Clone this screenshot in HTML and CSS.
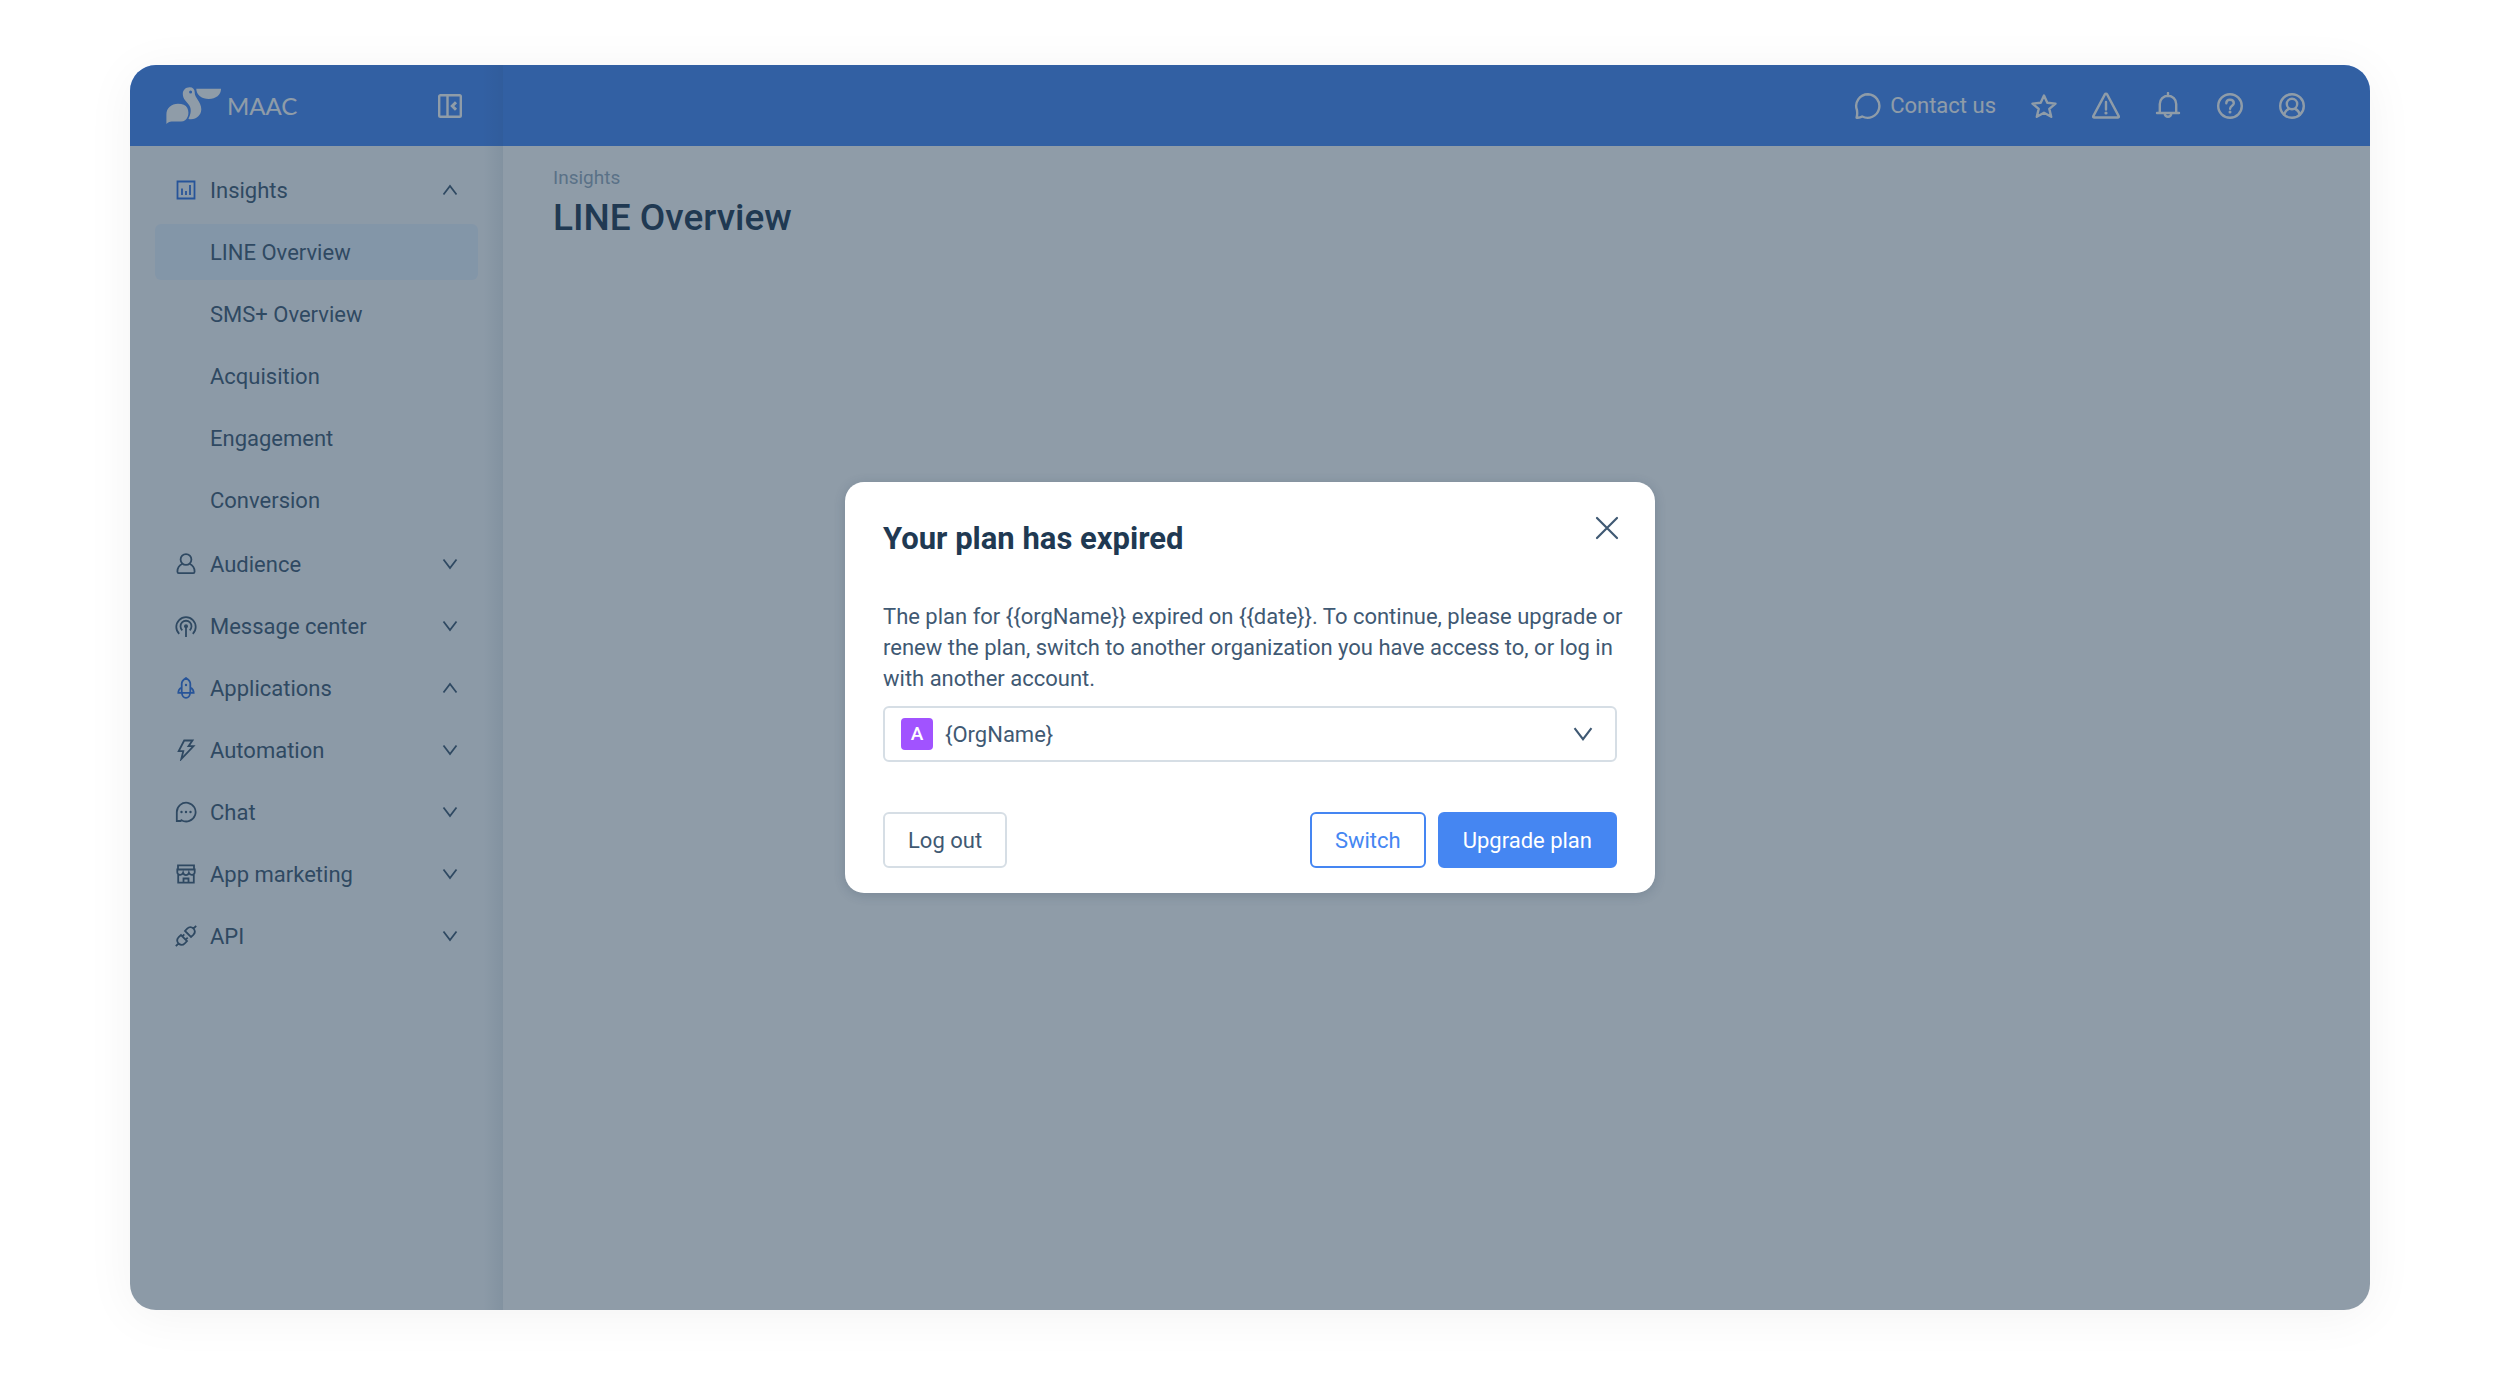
FILE: index.html
```html
<!DOCTYPE html>
<html lang="en">
<head>
    <meta charset="UTF-8">
    <meta name="viewport" content="width=device-width, initial-scale=1.0">
    <title>MAAC - LINE Overview</title>
    <link rel="stylesheet" href="styles.css">
</head>
<body>
    <svg class="sprite" aria-hidden="true">
        <symbol id="down" viewBox="0 0 20 20"><path d="M3.500 5.500 10 14l6.500-8.500"/></symbol>
        <symbol id="up" viewBox="0 0 20 20"><path d="M3.500 14.500 10 6l6.500 8.500"/></symbol>
    </svg>
    <div class="app">
        <aside class="sidebar">
            <div class="brand">
                <a class="logo" href="#">
                    <svg width="56" height="38" viewBox="0 0 56 38" aria-hidden="true">
                        <path d="M.4 37V27.500C.4 21 5.500 16.800 12 16.800c4.500 0 7.800 1.400 9.300 4.200 2.800 5.600.3 13.500-6.300 13.600H5.500C3.500 34.600 1.800 35.500.4 37z"/>
                        <path fill-rule="evenodd" d="M23.700.2c3.200 0 5 2 5 5-.3 5.500 6.600 9.500 6.600 17 0 5.600-4.500 10-10.300 10-1 0-2-.1-2.600-.5 2.500-4.700 3.300-9.700.8-13.500-2.300-3.300-6.400-6-6.400-11.200C16.800 3 19.500.2 23.700.2zM24.600 3.600a1.500 1.500 0 1 0 0 3 1.500 1.500 0 0 0 0-3z"/>
                        <path d="M30.300 1.700H55c0 6-5.300 10.300-12.200 10.300S30.300 8 30.300 1.700z"/>
                    </svg>
                    <span>MAAC</span>
                </a>
                <button class="collapse" aria-label="Collapse menu">
                    <svg width="24" height="24" viewBox="0 0 24 24"><path d="M2.500 1.200h19a1.300 1.300 0 0 1 1.300 1.300v19a1.300 1.300 0 0 1-1.300 1.300h-19a1.300 1.300 0 0 1-1.300-1.300v-19a1.300 1.300 0 0 1 1.300-1.300zM9.500 1.500v21"/><path class="arrow" d="M18 8.300 14.300 12l3.700 3.700"/></svg>
                </button>
            </div>
            <nav class="menu">
                <button class="item active">
                    <svg class="icon" viewBox="0 0 22 22"><path d="M2.500 2.500h17v17h-17zM7 9.500v6.500M11 12v4M15 6v10"/></svg>
                    <span>Insights</span>
                    <svg class="chevron"><use href="#up"/></svg>
                </button>
                <div class="submenu">
                    <a class="item selected" href="#">LINE Overview</a>
                    <a class="item" href="#">SMS+ Overview</a>
                    <a class="item" href="#">Acquisition</a>
                    <a class="item" href="#">Engagement</a>
                    <a class="item" href="#">Conversion</a>
                </div>
                <button class="item">
                    <svg class="icon" viewBox="0 0 22 22"><circle cx="11" cy="6.500" r="5.400"/><path d="M7.500 10.800C4.500 12.200 2.400 15 2.400 18.500c0 1 .4 1.600 1.300 1.600h14.600c.9 0 1.300-.6 1.300-1.600 0-3.500-2.100-6.300-5.100-7.700"/></svg>
                    <span>Audience</span>
                    <svg class="chevron"><use href="#down"/></svg>
                </button>
                <button class="item">
                    <svg class="icon" viewBox="0 0 22 22"><path d="M4.200 18.800A9.700 9.700 0 1 1 17.800 18.800M7.300 15.300A5.500 5.500 0 1 1 14.700 15.300M11 11.500V22"/><circle class="dot" cx="11" cy="11.200" r="2"/></svg>
                    <span>Message center</span>
                    <svg class="chevron"><use href="#down"/></svg>
                </button>
                <button class="item active">
                    <svg class="icon" viewBox="0 0 22 22"><path d="M6.700 15.700V6.800C6.700 4.500 8.500 2.500 11 1c2.500 1.500 4.300 3.500 4.300 5.800v8.900M6.700 10.500C4.500 11.600 3.300 13.500 3.300 15.900h15.400c0-2.400-1.200-4.300-3.400-5.400M7 16.200c0 2.500 1.600 4.600 4 4.600s4-2.100 4-4.600"/><circle class="dot" cx="11" cy="8" r="1.200"/></svg>
                    <span>Applications</span>
                    <svg class="chevron"><use href="#up"/></svg>
                </button>
                <button class="item">
                    <svg class="icon" viewBox="0 0 22 22"><path d="M9.200 1.500h8.300l-4 5.700h5L6.300 20l2-7.800H3.700z"/></svg>
                    <span>Automation</span>
                    <svg class="chevron"><use href="#down"/></svg>
                </button>
                <button class="item">
                    <svg class="icon" viewBox="0 0 22 22"><path d="M1.800 20V11a9.400 9.400 0 1 1 4.700 8.200L5.500 20z"/><circle class="dot" cx="6.500" cy="11" r="1.200"/><circle class="dot" cx="11" cy="11" r="1.200"/><circle class="dot" cx="15.500" cy="11" r="1.200"/></svg>
                    <span>Chat</span>
                    <svg class="chevron"><use href="#down"/></svg>
                </button>
                <button class="item">
                    <svg class="icon" viewBox="0 0 22 22"><path d="M3 6.500V2.300h16v4.200M2.300 6.500h17.400v2.700a2.700 2.700 0 0 1-2.900 2.600 3 3 0 0 1-2.900-2 3 3 0 0 1-5.800 0 3 3 0 0 1-2.900 2 2.700 2.700 0 0 1-2.900-2.600zM3.200 11.500v8.200h15.600v-8.200M8.500 19.500v-4h5v4"/></svg>
                    <span>App marketing</span>
                    <svg class="chevron"><use href="#down"/></svg>
                </button>
                <button class="item">
                    <svg class="icon" viewBox="0 0 22 22"><path d="M3.500 18.500c-1.700-2-1.500-4.600.2-6.300L6 10l6 6-2.200 2.300c-1.700 1.700-4.300 1.900-6.300.2zM.8 21.200l2.700-2.700M18.500 3.500c1.700 2 1.500 4.600-.2 6.300L16 12l-6-6 2.200-2.300c1.700-1.700 4.300-1.900 6.300-.2zM21.200.8l-2.700 2.700M7.300 11.300l2-2M10.700 14.700l2-2"/></svg>
                    <span>API</span>
                    <svg class="chevron"><use href="#down"/></svg>
                </button>
            </nav>
        </aside>

        <div class="content">
            <header class="topbar">
                <a class="contact" href="#">
                    <svg viewBox="0 0 28 28"><path d="M14 2.200A11.800 11.800 0 1 1 8.200 24.500C6.600 25.500 4.500 25.900 2.600 25.700 3.300 23.500 3.400 21.500 3 18.300A11.800 11.800 0 0 1 14 2.200z"/></svg>
                    <span>Contact us</span>
                </a>
                <button aria-label="Favorites">
                    <svg viewBox="0 0 28 28"><path d="m14 3.500 3.300 7.300 8.200.8-6.200 5.300 1.900 7.900-7.200-4-7.200 4 1.900-7.900-6.200-5.300 8.200-.8z"/></svg>
                </button>
                <button aria-label="Alerts">
                    <svg viewBox="0 0 28 28"><path d="M12.900 2.400a1.200 1.200 0 0 1 2.200 0l11.600 21.700c.4.800 0 1.400-.9 1.400H2.200c-.9 0-1.300-.6-.9-1.400zM14 10v7.500"/><circle class="dot" cx="14" cy="21" r="1.600"/></svg>
                </button>
                <button aria-label="Notifications">
                    <svg viewBox="0 0 28 28"><path d="M14 1v3M5.800 21V12a8.200 8.200 0 0 1 16.400 0v9M3 21h22M10.700 21.500a3.300 3.300 0 0 0 6.600 0"/></svg>
                </button>
                <button aria-label="Help">
                    <svg viewBox="0 0 28 28"><circle cx="14" cy="14" r="11.800"/><path d="M10.300 11.300c0-2 1.500-3.500 3.700-3.500s3.800 1.400 3.800 3.400c0 2.600-3.700 2.500-3.700 5.600"/><circle class="dot" cx="14" cy="20" r="1.500"/></svg>
                </button>
                <button aria-label="Account">
                    <svg viewBox="0 0 28 28"><circle cx="14" cy="14" r="11.800"/><circle cx="14" cy="12" r="5.200"/><path d="M6.200 22.500c.7-2.500 2.300-4.500 4.600-5.600M21.800 22.500c-.7-2.500-2.300-4.500-4.600-5.600"/></svg>
                </button>
            </header>
            <main class="page">
                <p class="crumb">Insights</p>
                <h1>LINE Overview</h1>
            </main>
        </div>

        <div class="overlay">
            <div class="modal" role="dialog" aria-modal="true" aria-labelledby="modal-title">
                <div class="modal-head">
                    <h2 id="modal-title">Your plan has expired</h2>
                    <button class="close" aria-label="Close">
                        <svg width="20" height="20" viewBox="0 0 20 20"><path d="m0 0 20 20M20 0 0 20"/></svg>
                    </button>
                </div>
                <p class="message">The plan for {{orgName}} expired on {{date}}. To continue, please upgrade or renew the plan, switch to another organization you have access to, or log in with another account.</p>
                <div class="org">
                    <span class="avatar">A</span>
                    <select aria-label="Organization">
                        <option>{OrgName}</option>
                    </select>
                    <svg width="26" height="26"><use href="#down"/></svg>
                </div>
                <div class="actions">
                    <button class="btn logout">Log out</button>
                    <button class="btn switch">Switch</button>
                    <button class="btn upgrade">Upgrade plan</button>
                </div>
            </div>
        </div>
    </div>
</body>
</html>
```
FILE: styles.css
```css
* {
    box-sizing: border-box;
}
body {
    margin: 0;
    padding: 65px 130px;
    background: #fff;
    color: #3f5973;
    font-family: Roboto, 'Liberation Sans', sans-serif;
    font-size: 22px;
    line-height: 31px;
}
h1, h2, p {
    margin: 0;
}
a {
    color: inherit;
    text-decoration: none;
}
button, select {
    padding: 0;
    border: none;
    background: none;
    color: inherit;
    font: inherit;
    cursor: pointer;
}
svg {
    display: block;
    flex: none;
    fill: none;
    stroke: currentColor;
    stroke-width: 1.8;
}
.sprite {
    position: absolute;
    width: 0;
    height: 0;
}
.dot {
    fill: currentColor;
    stroke: none;
}
.app {
    position: relative;
    display: flex;
    min-height: calc(100vh - 130px);
    border-radius: 26px;
    overflow: hidden;
    box-shadow: 0 6px 50px rgba(0, 0, 0, 0.05);
}

/* Sidebar */
.sidebar {
    position: relative;
    width: 373px;
    flex: none;
    background: #f9fbfd;
}
.sidebar::after {
    content: '';
    position: absolute;
    top: 0;
    right: 0;
    bottom: 0;
    width: 20px;
    background: linear-gradient(to right, rgba(31, 67, 95, 0), rgba(31, 67, 95, 0.09));
}
.brand {
    display: flex;
    align-items: center;
    justify-content: space-between;
    height: 81px;
    padding: 0 41px 0 36px;
    background: #4586f4;
    color: #fff;
}
.logo {
    display: flex;
    align-items: center;
    gap: 5px;
    font-family: Lato, sans-serif;
    font-size: 24px;
}
.logo svg {
    fill: currentColor;
    stroke: none;
}
.collapse svg {
    stroke-width: 2.4;
}
.collapse .arrow {
    stroke-width: 3;
}
.menu {
    display: flex;
    flex-direction: column;
    gap: 6px;
    padding: 16px 25px;
}
.submenu {
    display: flex;
    flex-direction: column;
    gap: 6px;
    margin-bottom: 2px;
}
.item {
    display: flex;
    align-items: center;
    gap: 13px;
    height: 56px;
    padding: 0 18px 0 20px;
    border-radius: 6px;
}
.item .chevron {
    width: 20px;
    height: 20px;
    margin-left: auto;
}
.icon {
    width: 22px;
    height: 22px;
}
.active .icon {
    color: #2f6fe0;
}
.submenu .item {
    padding-left: 55px;
}
.submenu .selected {
    background: #e7f2fe;
}

/* Content */
.content {
    flex: 1;
    background: #fff;
}
.topbar {
    display: flex;
    align-items: center;
    justify-content: flex-end;
    gap: 34px;
    height: 81px;
    padding: 0 64px;
    background: #4586f4;
    color: #fff;
}
.topbar svg {
    width: 28px;
    height: 28px;
    stroke-width: 2.4;
    stroke-linecap: round;
    stroke-linejoin: round;
}
.contact {
    display: flex;
    align-items: center;
    gap: 8px;
}
.page {
    padding: 16px 50px;
}
.crumb {
    color: #94a9bc;
    font-size: 19px;
}
h1 {
    color: #203952;
    font-size: 37px;
    font-weight: 500;
    line-height: 50px;
}

/* Modal */
.overlay {
    position: absolute;
    inset: 0;
    display: flex;
    align-items: center;
    justify-content: center;
    background: rgba(32, 57, 82, 0.5);
}
.modal {
    width: 810px;
    padding: 36px 38px 25px;
    border-radius: 19px;
    background: #fff;
    box-shadow: 0 2px 12px rgba(32, 57, 82, 0.2);
}
.modal-head {
    display: flex;
    align-items: flex-start;
    justify-content: space-between;
    margin-bottom: 41px;
}
h2 {
    color: #203952;
    font-size: 31px;
    font-weight: 700;
    line-height: 42px;
}
.close svg {
    overflow: visible;
    stroke-width: 2.2;
    stroke-linecap: round;
}
.message {
    margin-right: -12px;
}
.org {
    position: relative;
    height: 56px;
    margin: 12px 0 50px;
}
.org select {
    width: 100%;
    height: 100%;
    padding: 0 60px;
    border: 2px solid #d6dee5;
    border-radius: 6px;
    appearance: none;
}
.org svg {
    position: absolute;
    top: 15px;
    right: 21px;
    stroke-width: 1.6;
    pointer-events: none;
}
.avatar {
    position: absolute;
    top: 12px;
    left: 18px;
    width: 32px;
    height: 32px;
    border-radius: 4px;
    background: #a153ff;
    color: #fff;
    font-size: 19px;
    font-weight: 500;
    line-height: 32px;
    text-align: center;
    pointer-events: none;
}
.actions {
    display: flex;
    gap: 12px;
}
.btn {
    height: 56px;
    padding: 0 23px;
    border: 2px solid #d6dee5;
    border-radius: 6px;
}
.logout {
    margin-right: auto;
}
.switch {
    border-color: #4586f2;
    color: #4586f2;
}
.upgrade {
    border-color: #4586f2;
    background: #4586f2;
    color: #fff;
}
```
